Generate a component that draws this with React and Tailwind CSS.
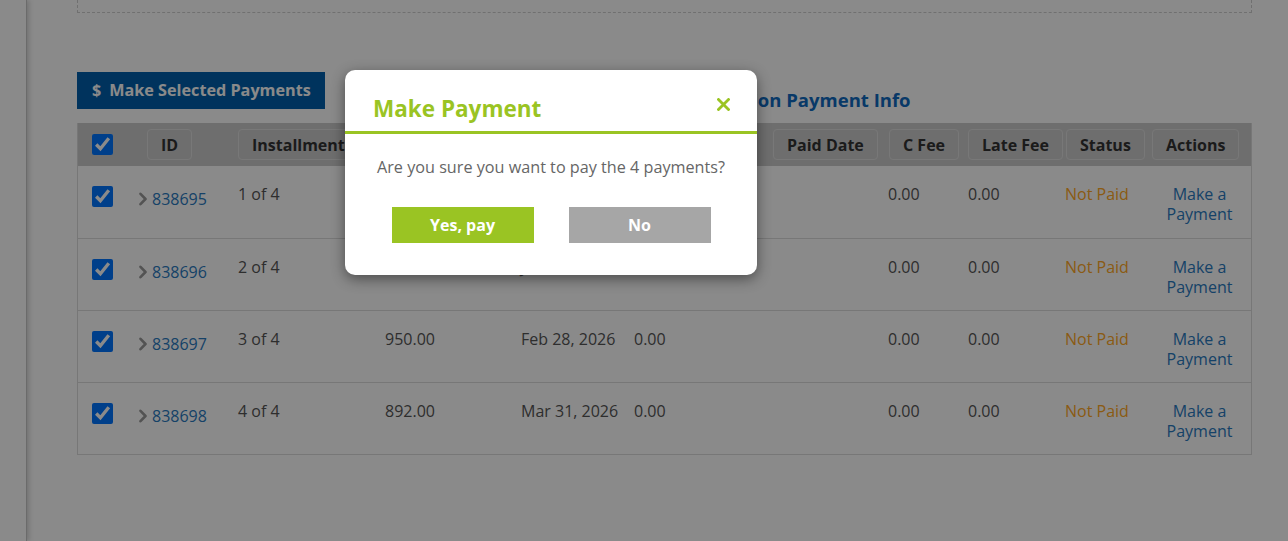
import React from "react";

const COLS = "grid-cols-[53px_103px_147px_136px_113px_139px_115px_80px_98px_86px_1fr]";

function HeadBox({ children, className = "" }) {
  return (
    <div
      className={
        "inline-flex h-[31px] items-center whitespace-nowrap rounded-[4px] border border-[#dedede] px-[13px] text-[16px] font-bold text-[#333] " +
        className
      }
    >
      {children}
    </div>
  );
}

function Check() {
  return (
    <input
      type="checkbox"
      defaultChecked
      className="m-0 h-[21px] w-[21px] accent-[#0075ff]"
    />
  );
}

function Chevron() {
  return (
    <svg width="10" height="14" viewBox="0 0 10 14" className="mr-[4px] shrink-0">
      <polyline
        points="2.5,1.8 7.5,7 2.5,12.2"
        fill="none"
        stroke="#9a9a9a"
        strokeWidth="2.6"
        strokeLinecap="round"
        strokeLinejoin="round"
      />
    </svg>
  );
}

const rows = [
  { id: "838695", inst: "1 of 4", amount: "1,000.00", due: "Dec 31, 2025" },
  { id: "838696", inst: "2 of 4", amount: "950.00", due: "Jan 31, 2026" },
  { id: "838697", inst: "3 of 4", amount: "950.00", due: "Feb 28, 2026" },
  { id: "838698", inst: "4 of 4", amount: "892.00", due: "Mar 31, 2026" },
];

export default function App() {
  return (
    <div
      className="relative flex h-[541px] w-full overflow-hidden bg-white"
      style={{ fontFamily: '"Open Sans", "Noto Sans", sans-serif' }}
    >
      {/* sidebar edge */}
      <div className="relative z-10 w-[27px] shrink-0 border-r border-[#c6c6c6] bg-white shadow-[2px_0_5px_rgba(0,0,0,0.18)]" />

      {/* main */}
      <div className="flex-1 pl-[50px]">
        <div className="w-[1175px]">
          <div className="h-[13px] border-x border-b border-dashed border-[#d0d0d0]" />

          <div className="mt-[59px] flex h-[37px] items-start">
            <button className="flex h-[37px] w-[248px] shrink-0 items-center gap-[8px] bg-[#005fad] pl-[15px] text-[16.2px] font-bold text-white">
              <span>$</span>
              <span>Make Selected Payments</span>
            </button>
            <div className="ml-[350px] mt-[15px] whitespace-nowrap text-[18.5px] font-bold leading-[26px] text-[#0f6ac0]">
              Installation Payment Info
            </div>
          </div>

          {/* table */}
          <div className="mt-[14px] border-x border-b border-[#dcdcdc]">
            <div className={`grid ${COLS} h-[43px] items-center bg-[#cccccc]`}>
              <div className="flex pl-[14px]">
                <Check />
              </div>
              <div className="pl-[16px]">
                <HeadBox>ID</HeadBox>
              </div>
              <div className="pl-[4px]">
                <HeadBox>Installment</HeadBox>
              </div>
              <div className="pl-[4px]">
                <HeadBox>Amount</HeadBox>
              </div>
              <div className="pl-[4px]">
                <HeadBox>Due Date</HeadBox>
              </div>
              <div className="pl-[4px]">
                <HeadBox>Paid Amt</HeadBox>
              </div>
              <div className="pl-[4px]">
                <HeadBox>Paid Date</HeadBox>
              </div>
              <div className="pl-[5px]">
                <HeadBox>C Fee</HeadBox>
              </div>
              <div className="pl-[4px]">
                <HeadBox>Late Fee</HeadBox>
              </div>
              <div className="pl-[4px]">
                <HeadBox>Status</HeadBox>
              </div>
              <div className="pl-[4px]">
                <HeadBox>Actions</HeadBox>
              </div>
            </div>

            {rows.map((r, i) => (
              <div
                key={r.id}
                className={`grid ${COLS} h-[72px] items-start text-[16px] leading-[20px] text-[#555] ${
                  i > 0 ? "border-t border-[#dcdcdc]" : ""
                }`}
              >
                <div className="flex pl-[14px] pt-[20px]">
                  <Check />
                </div>
                <div className="flex items-center pl-[7px] pt-[23px]">
                  <Chevron />
                  <span className="text-[#2a7abf]">{r.id}</span>
                </div>
                <div className="pl-[4px] pt-[18px]">{r.inst}</div>
                <div className="pl-[4px] pt-[18px]">{r.amount}</div>
                <div className="pl-[4px] pt-[18px]">{r.due}</div>
                <div className="pl-[4px] pt-[18px]">0.00</div>
                <div className="pt-[18px]" />
                <div className="pl-[4px] pt-[18px]">0.00</div>
                <div className="pl-[4px] pt-[18px]">0.00</div>
                <div className="pl-[3px] pt-[18px] text-[#ffa826]">Not Paid</div>
                <div className="pt-[18px] text-center text-[#2a7abf]">
                  Make a
                  <br />
                  Payment
                </div>
              </div>
            ))}
          </div>
        </div>
      </div>

      {/* overlay */}
      <div className="absolute inset-0 z-20 bg-black/[0.46]" />

      {/* modal */}
      <div className="absolute left-[345px] top-[70px] z-30 w-[412px] rounded-[10px] bg-white pb-[32px] shadow-[0_4px_14px_rgba(0,0,0,0.45)]">
        <div className="flex h-[64px] items-start justify-between border-b-[3px] border-[#9ac423] pl-[28px] pr-[27px]">
          <div className="pt-[24px] text-[22.5px] font-bold leading-[30px] text-[#9ac423]">
            Make Payment
          </div>
          <svg width="13" height="13" viewBox="0 0 13 13" className="mt-[28px]">
            <path d="M1.5 1.5 L11.5 11.5 M11.5 1.5 L1.5 11.5" stroke="#9ac423" strokeWidth="2.8" strokeLinecap="square" />
          </svg>
        </div>
        <div className="pt-[21px] text-center text-[16.2px] leading-[24px] text-[#666]">
          Are you sure you want to pay the 4 payments?
        </div>
        <div className="mt-[28px] flex justify-center gap-[35px]">
          <button className="h-[36px] w-[142px] bg-[#9ac423] text-[16px] font-bold text-white">
            Yes, pay
          </button>
          <button className="h-[36px] w-[142px] bg-[#a6a6a6] text-[16px] font-bold text-white">
            No
          </button>
        </div>
      </div>
    </div>
  );
}
